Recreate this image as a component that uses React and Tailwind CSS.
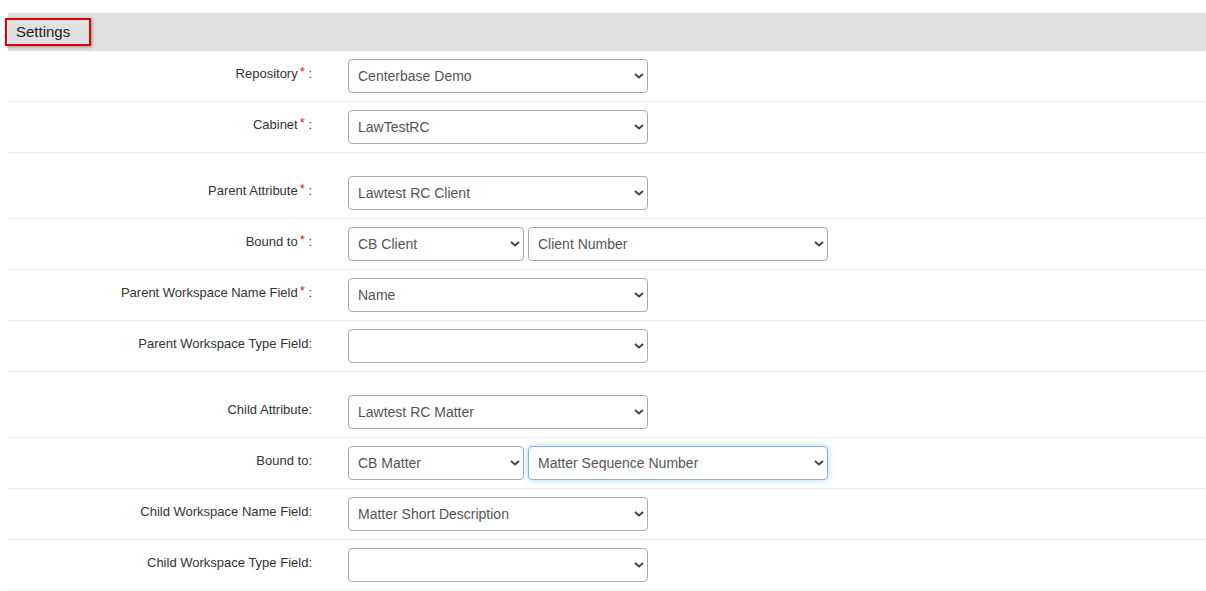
import { useState } from 'react';

const Chevron = () => (
  <svg
    className="pointer-events-none absolute right-[3px] top-1/2 -translate-y-1/2"
    width="12"
    height="7"
    viewBox="0 0 12 7"
  >
    <path d="M2 1.5 L6 5 L10 1.5" fill="none" stroke="#444" strokeWidth="2" />
  </svg>
);

const Select = ({ value, width = 'w-[300px]', focused = false }) => (
  <div className={`relative ${width}`}>
    <select
      defaultValue={value}
      className={`h-[34px] w-full appearance-none rounded-[4px] border bg-white pl-[9px] pr-[28px] text-[14px] text-[#555] outline-none ${
        focused
          ? 'border-[#8fb0d6] shadow-[0_0_6px_rgba(102,175,233,0.5)]'
          : 'border-[#aaa]'
      }`}
    >
      <option value={value}>{value}</option>
    </select>
    <Chevron />
  </div>
);

const Row = ({ label, required, extra, children }) => (
  <div
    className={`flex items-start border-b border-[#eee] pb-[8px] ${extra ? 'pt-[23px]' : 'pt-[8px]'}`}
  >
    <label className="w-[304px] shrink-0 pt-[6px] text-right text-[13px] leading-[18px] text-[#333]">
      {label}
      {required && <span className="relative -top-[2px] ml-[2px] text-[#e02020]">*</span>}
      {required ? ' :' : ':'}
    </label>
    <div className="ml-[36px] flex gap-[4px]">{children}</div>
  </div>
);

export default function App() {
  const [rows] = useState([
    { label: 'Repository', required: true, selects: ['Centerbase Demo'] },
    { label: 'Cabinet', required: true, selects: ['LawTestRC'] },
    { label: 'Parent Attribute', required: true, extra: true, selects: ['Lawtest RC Client'] },
    { label: 'Bound to', required: true, bound: ['CB Client', 'Client Number'] },
    { label: 'Parent Workspace Name Field', required: true, selects: ['Name'] },
    { label: 'Parent Workspace Type Field', selects: [''] },
    { label: 'Child Attribute', extra: true, selects: ['Lawtest RC Matter'] },
    { label: 'Bound to', bound: ['CB Matter', 'Matter Sequence Number'], focused: true },
    { label: 'Child Workspace Name Field', selects: ['Matter Short Description'] },
    { label: 'Child Workspace Type Field', selects: [''] },
  ]);

  return (
    <div className="min-h-screen bg-white pt-[13px] font-['Liberation_Sans',Arial,sans-serif]">
      <div className="ml-[8px]">
        {/* Header */}
        <div className="flex h-[38px] items-center bg-[#e0e0e0]">
          <div className="-ml-[3px] flex h-[28px] w-[86px] items-center border-2 border-[#e00000] pl-[9px] pt-[1px] text-[15px] text-[#222] shadow-[1px_1px_3px_rgba(0,0,0,0.35)]">
            Settings
          </div>
        </div>

        {rows.map((r, i) => (
          <Row key={i} label={r.label} required={r.required} extra={r.extra}>
            {r.bound ? (
              <>
                <Select value={r.bound[0]} width="w-[176px]" />
                <Select value={r.bound[1]} focused={r.focused} />
              </>
            ) : (
              <Select value={r.selects[0]} />
            )}
          </Row>
        ))}
      </div>
    </div>
  );
}
